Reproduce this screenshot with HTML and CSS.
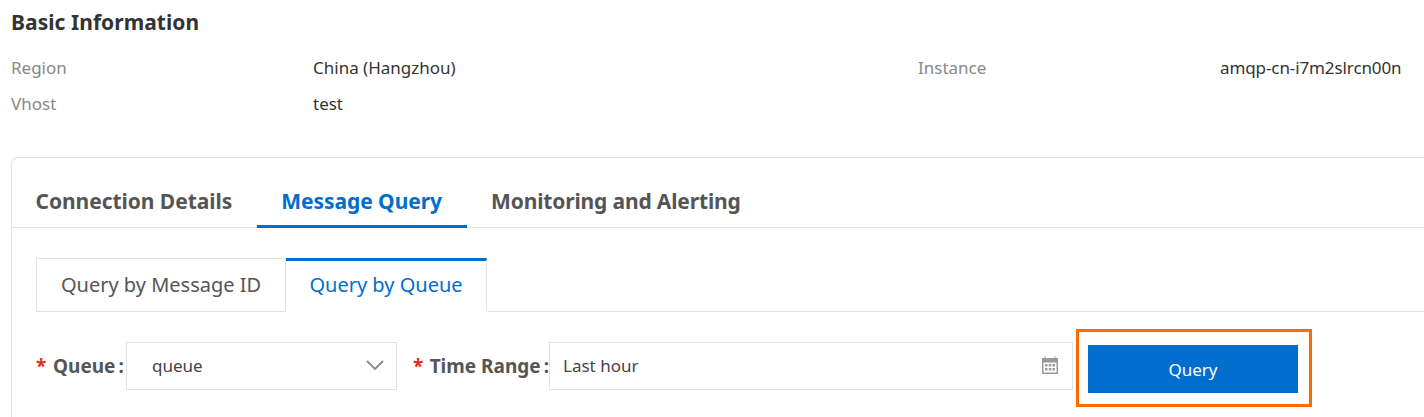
FILE: index.html
```html
<!DOCTYPE html>
<html lang="en">
<head>
<meta charset="utf-8">
<title>Basic Information</title>
<link rel="stylesheet" href="styles.css">
</head>
<body>
<section class="info">
  <h2 class="info-title">Basic Information</h2>
  <div class="info-grid">
    <span class="info-label">Region</span>
    <span class="info-value">China (Hangzhou)</span>
    <span class="info-label">Instance</span>
    <span class="info-value info-value-id">amqp-cn-i7m2slrcn00n</span>
    <span class="info-label">Vhost</span>
    <span class="info-value">test</span>
  </div>
</section>
<section class="card">
  <nav class="tabs">
    <a class="tab">Connection Details</a>
    <a class="tab tab-active">Message Query</a>
    <a class="tab tab-last">Monitoring and Alerting</a>
  </nav>
  <div class="card-body">
    <div class="subtabs">
      <a class="subtab">Query by Message ID</a>
      <a class="subtab subtab-active">Query by Queue</a>
    </div>
    <form class="query-form">
      <label class="field-label field-label-queue"><span class="req">*</span>Queue<span class="colon">:</span></label>
      <div class="select">
        <span>queue</span>
        <svg class="chevron" width="18" height="10" viewBox="0 0 18 10"><path d="M1 1l8 8 8-8" fill="none" stroke="#888" stroke-width="1.8"/></svg>
      </div>
      <label class="field-label field-label-time"><span class="req">*</span>Time Range<span class="colon">:</span></label>
      <div class="range">
        <span>Last hour</span>
        <svg class="calendar" width="20" height="20" viewBox="0 0 20 20">
          <path d="M2 3h16v16H2z" fill="#999"/>
          <path d="M3.500 7.500h13v10h-13z" fill="#fff"/>
          <path d="M4.500 1.500h1v3h-1zM14.500 1.500h1v3h-1z" fill="#999"/>
          <path d="M5 9h2.500v2.500H5zM8.800 9h2.500v2.500H8.800zM12.500 9H15v2.500h-2.500zM5 13h2.500v2.500H5zM8.800 13h2.500v2.500H8.800zM12.500 13H15v2.500h-2.500z" fill="#999"/>
        </svg>
      </div>
      <div class="action">
        <button class="query-btn" type="button">Query</button>
        <span class="highlight"></span>
      </div>
    </form>
  </div>
</section>
</body>
</html>
```
FILE: styles.css
```css
html, body {
  margin: 0;
  padding: 0;
  background: #fff;
  overflow: hidden;
}
body {
  width: 1424px;
  height: 417px;
  font-family: "Noto Sans", "Open Sans", sans-serif;
  font-size: 17px;
  color: #333;
}
.info {
  padding: 9px 0 0 11px;
}
.info-title {
  margin: 0;
  font-size: 21px;
  line-height: 26px;
  font-weight: 700;
  letter-spacing: 0.05px;
  color: #333;
}
.info-grid {
  display: grid;
  grid-template-columns: 302px 605px 302px 1fr;
  grid-auto-rows: 36px 37px;
  margin-top: 15px;
  line-height: 36px;
  white-space: nowrap;
}
.info-label {
  color: #888;
}
.info-value {
  color: #333;
}
.info-value-id {
  letter-spacing: -0.1px;
}
.card {
  box-sizing: border-box;
  margin: 34px 0 0 11px;
  height: 260px;
  border: 1px solid #e2e2e2;
  border-right: 0;
  border-bottom: 0;
  border-top-left-radius: 7px;
}
.tabs {
  display: flex;
  height: 69px;
  padding-left: 0;
  border-bottom: 1px solid #e2e2e2;
}
.tab {
  display: flex;
  align-items: center;
  box-sizing: border-box;
  height: 70px;
  padding: 18px 24.500px 0;
  font-size: 21px;
  font-weight: 700;
  letter-spacing: -0.05px;
  color: #555;
  white-space: nowrap;
  border-bottom: 3px solid transparent;
}
.tab:first-child {
  margin-left: -1px;
}
.tab-active {
  color: #006ecc;
  border-bottom-color: #006ecc;
}
.tab-last {
  letter-spacing: -0.15px;
}
.card-body {
  padding: 30px 0 0 24px;
}
.subtabs {
  display: flex;
  height: 53px;
  border-bottom: 1px solid #e2e2e2;
}
.subtab {
  display: flex;
  align-items: center;
  justify-content: center;
  box-sizing: border-box;
  width: 250px;
  height: 54px;
  padding-bottom: 1px;
  border: 1px solid #e2e2e2;
  font-size: 20px;
  color: #555;
  white-space: nowrap;
}
.subtab-active {
  width: 201px;
  padding-bottom: 3px;
  border-left: 0;
  border-top: 3px solid #006ecc;
  border-bottom-color: #fff;
  color: #006ecc;
}
.query-form {
  display: flex;
  align-items: center;
  margin-top: 30px;
  height: 48px;
}
.field-label {
  display: flex;
  font-size: 19px;
  font-weight: 700;
  color: #555;
  white-space: nowrap;
}
.field-label-queue {
  width: 90px;
}
.field-label-time {
  width: 136px;
  margin-left: 16px;
}
.req {
  width: 17px;
  color: #e02d1f;
}
.colon {
  margin-left: 3px;
}
.select, .range {
  display: flex;
  align-items: center;
  justify-content: space-between;
  box-sizing: border-box;
  height: 48px;
  padding-bottom: 2px;
  border: 1px solid #e2e2e2;
  font-size: 17px;
  color: #444;
}
.select {
  width: 271px;
  padding-left: 25px;
  padding-right: 12px;
}
.range {
  width: 524px;
  padding-left: 13px;
  padding-right: 12px;
}
.action {
  position: relative;
  margin-left: 15px;
  margin-top: 6px;
}
.query-btn {
  display: block;
  width: 210px;
  height: 48px;
  padding: 0;
  border: 0;
  background: #006ecc;
  color: #fff;
  font-family: inherit;
  font-size: 17px;
}
.highlight {
  position: absolute;
  left: -12px;
  top: -16px;
  box-sizing: border-box;
  width: 236px;
  height: 78px;
  border: 3px solid #ff6a00;
}
```
